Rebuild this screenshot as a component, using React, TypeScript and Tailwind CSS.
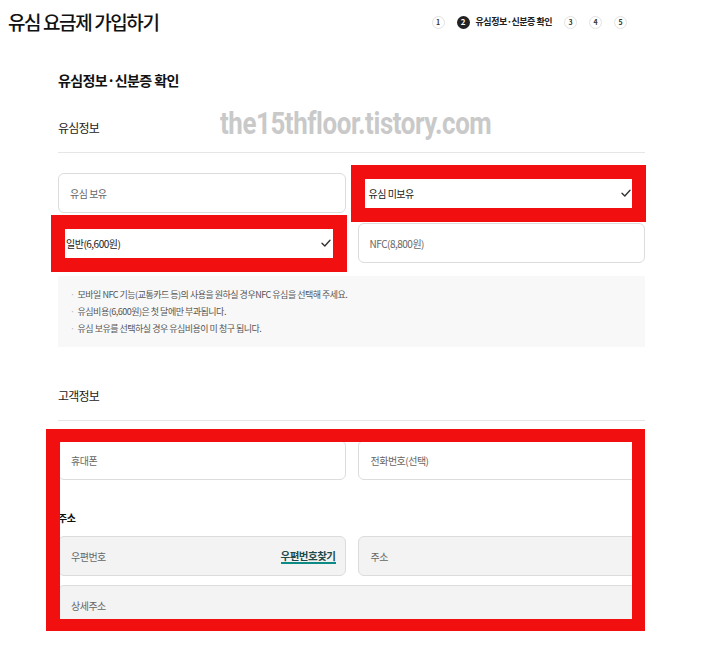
import React from "react";

const Check = () => (
  <svg width="10" height="8" viewBox="0 0 10 8" className="shrink-0">
    <path d="M1 4.2 L3.8 7 L9 1.2" fill="none" stroke="#333" strokeWidth="1.4" strokeLinecap="round" strokeLinejoin="round" />
  </svg>
);

function Opt({ label, selected, pl, pr }: { label: string; selected?: boolean; pl: string; pr: string }) {
  return (
    <div className={`relative flex h-[40px] items-center justify-between rounded-[6px] border border-[#dcdcdc] bg-white ${pl} ${pr}`}>
      <span className={selected ? "text-[#222]" : "text-[#666]"}>{label}</span>
      {selected && <Check />}
      {selected && (
        <div className="pointer-events-none absolute -left-[8px] -right-[2px] -top-[9px] -bottom-[10px] border-[14px] border-[#f20f0f]" />
      )}
    </div>
  );
}

function Step({ n, active }: { n: number; active?: boolean }) {
  return (
    <div
      className={
        active
          ? "flex h-[13px] w-[13px] items-center justify-center rounded-full bg-[#222] text-[8px] font-bold text-white"
          : "flex h-[13px] w-[13px] items-center justify-center rounded-full border border-[#e2e2e2] bg-white text-[7px] font-bold text-[#333]"
      }
    >
      {n}
    </div>
  );
}

export default function App() {
  return (
    <div className="relative min-h-[645px] w-[710px] bg-white font-['Noto_Sans_CJK_KR','Noto_Sans',sans-serif] text-[#222]">
      {/* header */}
      <div className="flex items-center pl-[8px] pr-[83px] pt-[8px]">
        <h1 className="h-[28px] text-[19px] font-medium leading-[28px] tracking-[-1.4px] text-[#111]">유심 요금제 가입하기</h1>
        <div className="ml-auto flex items-center gap-[12px]">
          <Step n={1} />
          <div className="flex items-center gap-[6px]">
            <Step n={2} active />
            <span className="text-[9px] font-bold tracking-[-0.5px] text-[#222]">유심정보·신분증 확인</span>
          </div>
          <Step n={3} />
          <Step n={4} />
          <Step n={5} />
        </div>
      </div>

      <div className="ml-[58px] mr-[65px] mt-[34px]">
        <h2 className="h-[20px] text-[14px] font-bold leading-[20px] tracking-[-0.6px] text-[#111]">유심정보·신분증 확인</h2>

        <div className="mt-[29px] border-b border-[#e6e6e6] pb-[15px]">
          <div className="h-[18px] text-[12px] leading-[18px] tracking-[-0.8px] text-[#222]">유심정보</div>
        </div>

        <div className="mt-[20px] grid grid-cols-2 gap-x-[12px] gap-y-[10px] text-[10px] tracking-[-0.5px]">
          <Opt label="유심 보유" pl="pl-[11px]" pr="pr-[13px]" />
          <Opt label="유심 미보유" selected pl="pl-[10px]" pr="pr-[13px]" />
          <Opt label="일반(6,600원)" selected pl="pl-[7px]" pr="pr-[14px]" />
          <Opt label="NFC(8,800원)" pl="pl-[11px]" pr="pr-[13px]" />
        </div>

        <div className="mt-[13px] bg-[#f8f8f8] py-[10px] pl-[12px] text-[9px] leading-[17px] tracking-[-0.5px] text-[#555]">
          <div className="flex gap-[3px]"><span className="text-[#bbb]">·</span><span>모바일 NFC 기능(교통카드 등)의 사용을 원하실 경우NFC 유심을 선택해 주세요.</span></div>
          <div className="flex gap-[3px]"><span className="text-[#bbb]">·</span><span>유심비용(6,600원)은 첫 달에만 부과됩니다.</span></div>
          <div className="flex gap-[3px]"><span className="text-[#bbb]">·</span><span>유심 보유를 선택하실 경우 유심비용이 미 청구 됩니다.</span></div>
        </div>

        <div className="mt-[40px] border-b border-[#e6e6e6] pb-[15px]">
          <div className="h-[18px] text-[12px] leading-[18px] tracking-[-0.8px] text-[#222]">고객정보</div>
        </div>

        <div className="relative mt-[19px] text-[10px] tracking-[-0.5px]">
          <div className="grid grid-cols-2 gap-x-[12px]">
            <div className="flex h-[40px] items-center rounded-[6px] border border-[#dcdcdc] bg-white pl-[12px] text-[#666]">휴대폰</div>
            <div className="flex h-[40px] items-center rounded-[6px] border border-[#dcdcdc] bg-white pl-[12px] text-[#666]">전화번호(선택)</div>
          </div>

          <div className="mt-[30px] h-[16px] text-[10px] font-bold leading-[16px] text-[#111]">주소</div>

          <div className="mt-[10px] grid grid-cols-2 gap-x-[12px]">
            <div className="flex h-[40px] items-center justify-between rounded-[6px] border border-[#dcdcdc] bg-[#f3f3f3] pl-[12px] pr-[9px]">
              <span className="text-[#666]">우편번호</span>
              <span className="border-b-2 border-[#0b8a86] text-[10.5px] font-bold leading-[13px] text-[#1d4a4a]">우편번호찾기</span>
            </div>
            <div className="flex h-[40px] items-center rounded-[6px] border border-[#dcdcdc] bg-[#f3f3f3] pl-[12px] text-[#666]">주소</div>
          </div>

          <div className="mt-[9px] flex h-[40px] items-center rounded-[6px] border border-[#dcdcdc] bg-[#f3f3f3] pl-[12px] text-[#666]">상세주소</div>

          <div className="pointer-events-none absolute -left-[12px] right-0 -top-[11px] -bottom-[6px] border-b-[12px] border-l-[14px] border-r-[13px] border-t-[13px] border-[#f20f0f]" />
        </div>
      </div>

      {/* watermark */}
      <div className="pointer-events-none absolute left-[220px] top-[105px] origin-left scale-x-[0.835] font-['Roboto','Liberation_Sans',sans-serif] text-[31px] font-bold leading-[38px] tracking-[-0.5px] text-[#c9c9c9]">
        the15thfloor.tistory.com
      </div>
    </div>
  );
}
